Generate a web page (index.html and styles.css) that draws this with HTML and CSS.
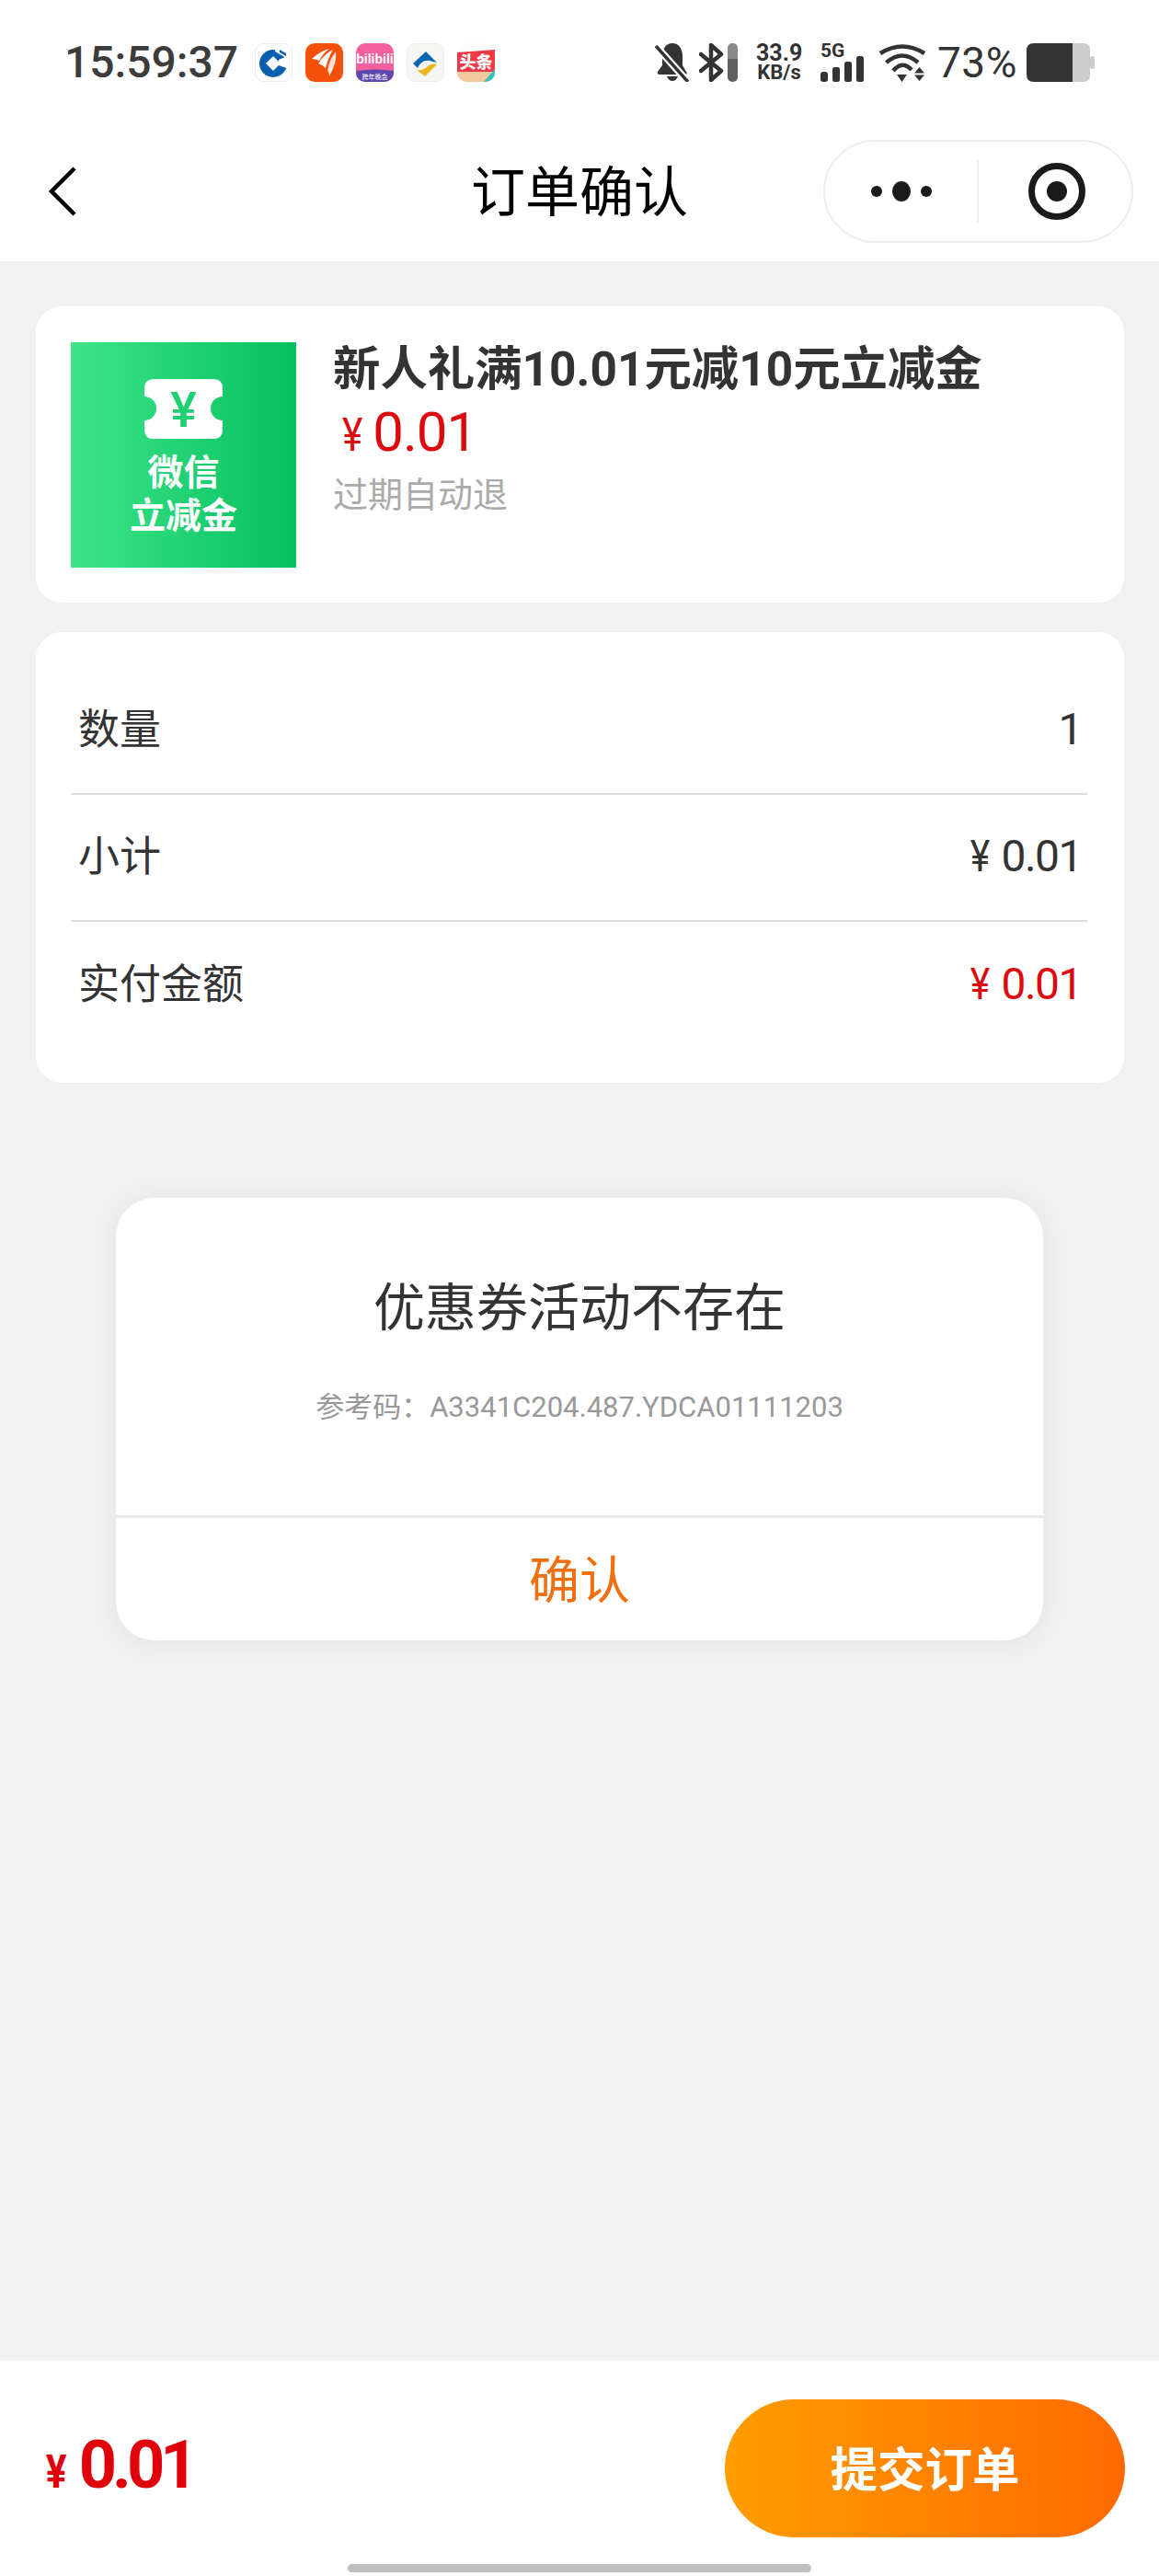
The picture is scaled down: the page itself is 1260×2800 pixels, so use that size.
FILE: index.html
```html
<!DOCTYPE html>
<html lang="zh-CN">
<head>
  <meta charset="UTF-8">
  <meta name="viewport" content="width=device-width, initial-scale=1.0">
  <link rel="stylesheet" href="styles.css">
  <title>订单确认</title>
</head>
<body>

  <div class="statusBar">
    <span class="time">15:59:37</span>
    <div class="appIcons">
      <svg class="appIcon" viewBox="0 0 41 42">
        <rect x="0.500" y="0.500" width="40" height="41" rx="9" fill="#fff" stroke="#ececec"/>
        <circle cx="20" cy="22" r="15" fill="#0a5fae"/>
        <path d="M20 14 L28 22 L20 30 L12 22 Z" fill="#fff"/>
        <path d="M26 18 L37 13 L37 28 L26 24 Z" fill="#fff"/>
        <path d="M22 6 L36 14 L36 17 L22 9 Z" fill="#fff"/>
        <path d="M27 7 L34 11 L34 14 L27 10 Z" fill="#0a5fae"/>
      </svg>
      <svg class="appIcon" viewBox="0 0 41 42">
        <rect width="41" height="42" rx="10" fill="#f4500a"/>
        <path d="M7 17 Q15 9 26 6 Q19 11 15 19 Q11 17 7 17 Z" fill="#fff"/>
        <path d="M14 22 Q20 12 30 7 Q25 15 22 27 Q18 23 14 22 Z" fill="#fff"/>
        <path d="M24 29 Q27 16 33 9 Q35 20 26 36 Q26 32 24 29 Z" fill="#ffe6d8"/>
      </svg>
      <svg class="appIcon" viewBox="0 0 41 42">
        <rect width="41" height="42" rx="10" fill="#f35f9f"/>
        <path d="M0 30 Q20 27 41 30 V32 A10 10 0 0 1 31 42 H10 A10 10 0 0 1 0 32 Z" fill="#5d46ad"/>
        <text x="20.500" y="22" class="biliText">bilibili</text>
        <text x="20.500" y="39" class="biliSub">跨年晚会</text>
      </svg>
      <svg class="appIcon" viewBox="0 0 41 42">
        <rect x="0.500" y="0.500" width="40" height="41" rx="9" fill="#f6f7f4" stroke="#ececec"/>
        <path d="M21 9 L33 21 L25 19 C19 18 15 21 12 27 L7 22 Z" fill="#0b67b2"/>
        <path d="M33 23 L20 36 L11 29 C16 30 20 28 23 25 C25 23 29 22 33 23 Z" fill="#ecb71a"/>
      </svg>
      <svg class="appIcon" viewBox="0 0 41 42">
        <rect width="41" height="42" rx="10" fill="#fbfbfb"/>
        <path d="M0 10 L41 7 V31 H0 Z" fill="#ee3a45"/>
        <path d="M0 31 H41 V32 A10 10 0 0 1 31 42 H10 A10 10 0 0 1 0 32 Z" fill="#f5c9a0"/>
        <path d="M41 28 V32 A10 10 0 0 1 31 42 H29 Z" fill="#35c0b8"/>
        <text x="20.500" y="27" class="ttText">头条</text>
      </svg>
    </div>
    <div class="sysIcons">
      <svg class="bell" viewBox="0 0 37 42">
        <path d="M19 0 C12 0 8 6 8 14 V24 L3 31 Q2 34 5 34 H33 Q36 34 34 31 L30 24 V14 C30 6 26 0 19 0 Z M13 36 H25 Q23 41 19 41 Q15 41 13 36 Z" fill="#333"/>
        <path d="M1 3 L36 42" stroke="#fff" stroke-width="8"/>
        <path d="M1 3 L36 42" stroke="#333" stroke-width="3.500"/>
      </svg>
      <svg class="bluetooth" viewBox="0 0 27 42">
        <path d="M2 12 L24 30 L13 40 V2 L24 12 L2 30" fill="none" stroke="#333" stroke-width="4.500" stroke-linejoin="round" stroke-linecap="round"/>
      </svg>
      <div class="vibrateBar"></div>
      <div class="netSpeed">33.9<br>KB/s</div>
      <div class="signal">
        <span class="fiveG">5G</span>
        <svg class="signalBars" viewBox="0 0 48 28">
          <rect x="0" y="17" width="8" height="11" rx="3" fill="#333"/>
          <rect x="13" y="12" width="8" height="16" rx="2.500" fill="#333"/>
          <rect x="26" y="6" width="8" height="22" rx="2.500" fill="#333"/>
          <rect x="39" y="0" width="8" height="28" rx="2.500" fill="#333"/>
        </svg>
      </div>
      <svg class="wifi" viewBox="0 0 52 42">
        <path d="M2 11 Q26 -4 50 11" fill="none" stroke="#333" stroke-width="4.500"/>
        <path d="M8.500 21 Q26 6 43 21" fill="none" stroke="#333" stroke-width="4.500"/>
        <path d="M16 30 Q26 18 36 29" fill="none" stroke="#333" stroke-width="4.500"/>
        <path d="M20 34 H31 L25.500 42 Z" fill="#333"/>
        <path d="M44.500 26 L50 32.500 H39 Z M39 34.500 H50 L44.500 41 Z" fill="#333"/>
      </svg>
      <span class="percent">73%</span>
      <svg class="battery" viewBox="0 0 74 42">
        <rect x="69" y="14" width="5" height="14" rx="2.500" fill="#ccc"/>
        <path d="M50 0 H62 Q69 0 69 7 V35 Q69 42 62 42 H50 Z" fill="#ccc"/>
        <path d="M8 0 H50 V42 H8 Q0 42 0 34 V8 Q0 0 8 0 Z" fill="#333"/>
      </svg>
    </div>
  </div>

  <div class="navBar">
    <svg class="backIcon" viewBox="0 0 30 54">
      <path d="M28 2 L3 27 L28 52" fill="none" stroke="#000" stroke-width="4.500"/>
    </svg>
    <h1 class="navTitle">订单确认</h1>
    <div class="capsule">
      <div class="capsuleBtn moreBtn">
        <i class="dot"></i><i class="dot dotBig"></i><i class="dot"></i>
      </div>
      <div class="capsuleBtn closeBtn">
        <i class="targetIcon"></i>
      </div>
    </div>
  </div>

  <div class="content">
    <div class="card goodsCard">
      <div class="goodsPic">
        <svg class="ticket" viewBox="0 0 85 65">
          <path d="M10 0 H75 Q85 0 85 10 V19 A13 13 0 0 0 85 45 V55 Q85 65 75 65 H10 Q0 65 0 55 V45 A13 13 0 0 0 0 19 V10 Q0 0 10 0 Z" fill="#fff"/>
          <text x="42.500" y="52" class="ticketMark">¥</text>
        </svg>
        <span class="picText">微信<br>立减金</span>
      </div>
      <div class="goodsInfo">
        <div class="goodsName">新人礼满10.01元减10元立减金</div>
        <div class="goodsPrice"><span class="yen">¥</span>0.01</div>
        <div class="goodsNote">过期自动退</div>
      </div>
    </div>

    <div class="card summaryCard">
      <div class="row">
        <span class="rowLabel">数量</span>
        <span class="rowValue">1</span>
      </div>
      <div class="row">
        <span class="rowLabel">小计</span>
        <span class="rowValue"><span class="rowYen">¥</span>0.01</span>
      </div>
      <div class="row">
        <span class="rowLabel">实付金额</span>
        <span class="rowValue red"><span class="rowYen">¥</span>0.01</span>
      </div>
    </div>
  </div>

  <div class="footerBar">
    <div class="total"><span class="totalYen">¥</span>0.01</div>
    <button class="submitBtn">提交订单</button>
  </div>
  <div class="homeBar"></div>

  <div class="dialog">
    <div class="dialogBody">
      <div class="dialogTitle">优惠券活动不存在</div>
      <div class="dialogCode">参考码：A3341C204.487.YDCA01111203</div>
    </div>
    <div class="dialogBtn">确认</div>
  </div>

</body>
</html>
```

FILE: styles.css
```css
* {
  box-sizing: border-box;
}

body {
  position: relative;
  margin: 0;
  height: 2800px;
  display: flex;
  flex-direction: column;
  overflow: hidden;
  background-color: #f1f1f1;
  color: #333;
  font-family: Roboto, "Noto Sans CJK SC", sans-serif;
}

.statusBar {
  height: 136px;
  padding: 47px 70px 0 70px;
  display: flex;
  align-items: flex-start;
  background-color: #fff;
}

.time {
  width: 187px;
  font-size: 48px;
  line-height: 42px;
  font-weight: 500;
  color: #3c3c3c;
}

.appIcons {
  margin-left: 20px;
  display: flex;
  gap: 14px;
}

.appIcon {
  width: 41px;
  height: 42px;
}

.biliText {
  font-family: "Liberation Sans", sans-serif;
  font-size: 14px;
  font-weight: 700;
  fill: #fff;
  text-anchor: middle;
}

.biliSub {
  font-size: 7px;
  fill: #fff;
  text-anchor: middle;
}

.ttText {
  font-size: 18px;
  font-weight: 900;
  fill: #fff;
  text-anchor: middle;
}

.sysIcons {
  margin-left: auto;
  display: flex;
  align-items: flex-start;
}

.bell {
  width: 37px;
  height: 42px;
}

.bluetooth {
  width: 27px;
  height: 42px;
  margin-left: 11px;
}

.vibrateBar {
  width: 11px;
  height: 42px;
  margin-left: 4px;
  border-radius: 5px;
  background: linear-gradient(to bottom, #8a8a8a 0, #8a8a8a 40%, #606060 40%, #606060 100%);
}

.netSpeed {
  width: 50px;
  margin-left: 20px;
  font-size: 22px;
  line-height: 20px;
  font-weight: 700;
  text-align: center;
  color: #333;
}

.netSpeed::first-line {
  font-size: 25px;
  line-height: 22px;
}

.signal {
  width: 49px;
  height: 42px;
  margin-left: 20px;
  display: flex;
  flex-direction: column;
  justify-content: space-between;
}

.fiveG {
  font-size: 21px;
  line-height: 16px;
  font-weight: 700;
  color: #333;
}

.signalBars {
  width: 48px;
  height: 28px;
  margin-top: -14px;
}

.wifi {
  width: 52px;
  height: 42px;
  margin-left: 14px;
}

.percent {
  width: 84px;
  margin-left: 12px;
  font-size: 46px;
  line-height: 42px;
  letter-spacing: 0.5px;
  color: #333;
}

.battery {
  width: 74px;
  height: 42px;
  margin-left: 13px;
}

.navBar {
  height: 148px;
  padding: 0 28px 4px 28px;
  display: grid;
  grid-template-columns: 1fr auto 1fr;
  align-items: center;
  background-color: #fff;
}

.backIcon {
  width: 30px;
  height: 54px;
  margin-left: 25px;
}

.navTitle {
  margin: 4px 0 0 0;
  font-size: 59px;
  line-height: 60px;
  font-weight: 400;
  color: #000;
}

.capsule {
  justify-self: end;
  width: 337px;
  height: 112px;
  display: flex;
  align-items: center;
  border: 2px solid #ededed;
  border-radius: 56px;
}

.capsuleBtn {
  display: flex;
  align-items: center;
  justify-content: center;
  height: 68px;
}

.moreBtn {
  width: 167px;
  gap: 11px;
  border-right: 2px solid #eee;
}

.closeBtn {
  flex: 1;
  padding-left: 3px;
}

.dot {
  width: 12px;
  height: 12px;
  border-radius: 50%;
  background-color: #1a1a1a;
}

.dotBig {
  width: 20px;
  height: 22px;
}

.targetIcon {
  position: relative;
  display: block;
  width: 62px;
  height: 62px;
  border: 7px solid #1a1a1a;
  border-radius: 50%;
}

.targetIcon::after {
  content: "";
  position: absolute;
  top: 13px;
  left: 13px;
  width: 22px;
  height: 22px;
  border-radius: 50%;
  background-color: #1a1a1a;
}

.content {
  flex: 1;
  padding: 49px 38px 0 39px;
}

.card {
  background-color: #fff;
  border-radius: 28px;
}

.goodsCard {
  height: 322px;
  padding: 39px 38px;
  display: flex;
}

.goodsPic {
  width: 245px;
  height: 245px;
  padding-top: 40px;
  display: flex;
  flex-direction: column;
  align-items: center;
  background: linear-gradient(to right, #3ee48a, #06c05f);
}

.ticket {
  width: 85px;
  height: 65px;
}

.ticketMark {
  font-size: 54px;
  font-weight: 500;
  fill: #1fcf72;
  text-anchor: middle;
}

.picText {
  margin-top: 14px;
  font-size: 39px;
  line-height: 47px;
  font-weight: 700;
  text-align: center;
  color: #fff;
}

.goodsInfo {
  margin-left: 40px;
}

.goodsName {
  font-size: 51.400px;
  line-height: 60px;
  font-weight: 700;
  color: #333;
}

.goodsPrice {
  margin-top: 3px;
  padding-left: 8px;
  font-size: 60px;
  line-height: 70px;
  letter-spacing: -1px;
  color: #dc0a0f;
}

.yen {
  display: inline-block;
  margin-right: 10px;
  font-size: 50px;
  transform: scaleX(0.85);
}

.goodsNote {
  margin-top: 7px;
  font-size: 38px;
  line-height: 46px;
  color: #aaa;
}

.summaryCard {
  height: 490px;
  margin-top: 32px;
  padding: 39px 40px 0 38px;
}

.row {
  height: 138px;
  padding: 0 6px 3px 8px;
  display: flex;
  align-items: center;
  justify-content: space-between;
  border-bottom: 2px solid #ddd;
  font-size: 45px;
}

.row:last-child {
  border-bottom: none;
}

.rowLabel {
  margin-bottom: 6px;
}

.rowValue {
  font-size: 48px;
  letter-spacing: -1.500px;
}

.rowYen {
  display: inline-block;
  margin-right: 12px;
  transform: scaleX(0.85);
}

.red {
  color: #dc0a0f;
}

.footerBar {
  height: 234px;
  padding: 42px 37px 0 48px;
  display: flex;
  align-items: flex-start;
  justify-content: space-between;
  background-color: #fff;
}

.total {
  margin-top: 32px;
  font-size: 72px;
  line-height: 80px;
  font-weight: 700;
  letter-spacing: -5px;
  color: #e0000b;
}

.totalYen {
  display: inline-block;
  margin-right: 16px;
  font-size: 50px;
  transform: scaleX(0.85);
}

.submitBtn {
  width: 435px;
  height: 150px;
  padding: 0 0 6px 0;
  border: none;
  border-radius: 75px;
  background: linear-gradient(to right, #ff9d00, #ff6a00);
  color: #fff;
  font-family: inherit;
  font-size: 51.500px;
  font-weight: 700;
}

.homeBar {
  position: absolute;
  left: 378px;
  bottom: 4px;
  width: 504px;
  height: 9px;
  border-radius: 5px;
  background-color: #c0c0c0;
}

.dialog {
  position: absolute;
  top: 1302px;
  left: 126px;
  width: 1008px;
  height: 481px;
  display: flex;
  flex-direction: column;
  background-color: #fff;
  border-radius: 42px;
  box-shadow: 0 2px 30px rgba(0, 0, 0, 0.06);
}

.dialogBody {
  height: 348px;
  padding-top: 87px;
  text-align: center;
  border-bottom: 3px solid #e8e8e8;
}

.dialogTitle {
  font-size: 56px;
  line-height: 66px;
  color: #333;
}

.dialogCode {
  margin-top: 55px;
  font-size: 31px;
  line-height: 40px;
  color: #999;
}

.dialogBtn {
  flex: 1;
  padding-bottom: 8px;
  display: flex;
  align-items: center;
  justify-content: center;
  font-size: 55px;
  color: #f07010;
}
```
